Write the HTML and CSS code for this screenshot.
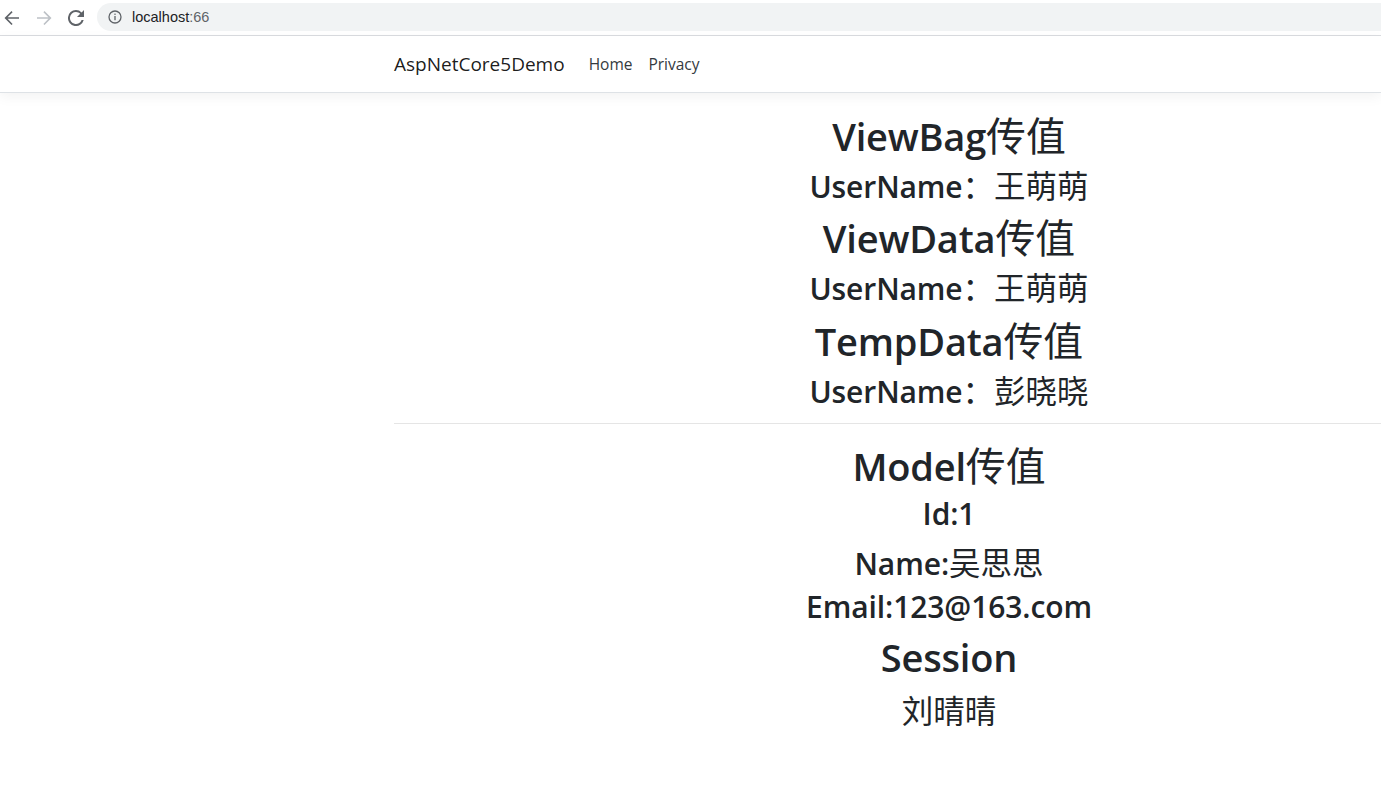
FILE: index.html
```html
<!DOCTYPE html>
<html lang="zh">
<head>
<meta charset="utf-8">
<title>AspNetCore5Demo</title>
<link rel="stylesheet" href="styles.css">
</head>
<body>
<div class="chrome">
  <div class="chrome-btns">
    <svg class="cbtn" width="16" height="16" viewBox="0 0 16 16"><path d="M15 7.2H3.6l5-5L7.5 1 .5 8l7 7 1.1-1.1-5-5.1H15z" fill="#5f6368"/></svg>
    <svg class="cbtn" width="16" height="16" viewBox="0 0 16 16"><path d="M1 7.2h11.4l-5-5L8.5 1l7 7-7 7-1.1-1.1 5-5.1H1z" fill="#bdc1c6"/></svg>
    <svg class="cbtn" width="16" height="16" viewBox="0 0 16 16"><path d="M13.6 2.4A7.9 7.9 0 0 0 8 0a8 8 0 1 0 7.7 10h-2.1A6 6 0 1 1 8 2c1.7 0 3.1.7 4.2 1.8L9 7h7V0z" fill="#5f6368"/></svg>
  </div>
  <div class="omnibox">
    <svg width="14" height="14" viewBox="0 0 14 14"><circle cx="7" cy="7" r="6" fill="none" stroke="#5f6368" stroke-width="1.3"/><rect x="6.35" y="6" width="1.3" height="4.2" fill="#5f6368"/><rect x="6.35" y="3.6" width="1.3" height="1.3" fill="#5f6368"/></svg>
    <span class="url">localhost<span class="port">:66</span></span>
  </div>
</div>
<header class="navbar">
  <div class="nav-inner">
    <a class="brand">AspNetCore5Demo</a>
    <nav class="nav-links">
      <a class="nav-link">Home</a>
      <a class="nav-link">Privacy</a>
    </nav>
  </div>
</header>
<main class="container">
  <h1 class="h1">ViewBag<span class="cjk">传值</span></h1>
  <h2 class="h2">UserName<span class="cjk">：王萌萌</span></h2>
  <h1 class="h1">ViewData<span class="cjk">传值</span></h1>
  <h2 class="h2">UserName<span class="cjk">：王萌萌</span></h2>
  <h1 class="h1">TempData<span class="cjk">传值</span></h1>
  <h2 class="h2">UserName<span class="cjk">：彭晓晓</span></h2>
  <hr class="rule">
  <h1 class="h1">Model<span class="cjk">传值</span></h1>
  <h2 class="h2">Id:1</h2>
  <h2 class="h2">Name:<span class="cjk">吴思思</span></h2>
  <h2 class="h2">Email:123@163.com</h2>
  <h1 class="h1">Session</h1>
  <h2 class="h2"><span class="cjk">刘晴晴</span></h2>
</main>
</body>
</html>
```
FILE: styles.css
```css
html, body {
  margin: 0;
  padding: 0;
  background: #fff;
  overflow: hidden;
  width: 1381px;
  height: 805px;
}
body {
  font-family: "Open Sans", "Noto Sans CJK SC", sans-serif;
  color: #212529;
}
.chrome {
  height: 35px;
  border-bottom: 1px solid #dadce0;
  display: flex;
  align-items: center;
  background: #fff;
}
.chrome-btns {
  display: flex;
  align-items: center;
  gap: 16px;
  padding-left: 4px;
  width: 93px;
}
.cbtn { display: block; }
.omnibox {
  flex: 1;
  height: 28px;
  margin-top: -2px;
  background: #f1f3f4;
  border-radius: 14px 0 0 14px;
  display: flex;
  align-items: center;
  gap: 10px;
  padding-left: 11px;
}
.omnibox svg { display: block; }
.url {
  font-family: "Liberation Sans", "Noto Sans", sans-serif;
  font-size: 14.5px;
  color: #202124;
}
.port { color: #5f6368; }
.navbar {
  height: 56px;
  border-bottom: 1px solid #dee2e6;
  box-shadow: 0 4px 12px rgba(0,0,0,.05);
  background: #fff;
  display: flex;
  align-items: center;
}
.nav-inner {
  margin-left: 394px;
  display: flex;
  align-items: center;
}
.brand {
  font-size: 19px;
  color: rgba(0,0,0,.9);
  margin-right: 16px;
}
.nav-links { display: flex; }
.nav-link {
  font-size: 15.5px;
  padding: 8px;
  color: #343a40;
}
.container {
  width: 1110px;
  margin-left: 394px;
  padding-top: 17px;
  text-align: center;
}
.h1, .h2 {
  margin: 0 0 8px;
  line-height: 1.2;
  font-weight: 600;
  white-space: nowrap;
}
.h1 { font-size: 38px; height: 48px; letter-spacing: -0.2px; }
.h2 { font-size: 30px; height: 38.4px; letter-spacing: -0.1px; }
.cjk {
  font-family: "Noto Sans CJK SC", sans-serif;
  font-weight: 400;
  font-size: 1.05em;
  letter-spacing: 0;
}
.rule {
  margin: 14px 0 16px;
  border: 0;
  border-top: 1px solid rgba(0,0,0,.1);
  height: 0;
}
```
